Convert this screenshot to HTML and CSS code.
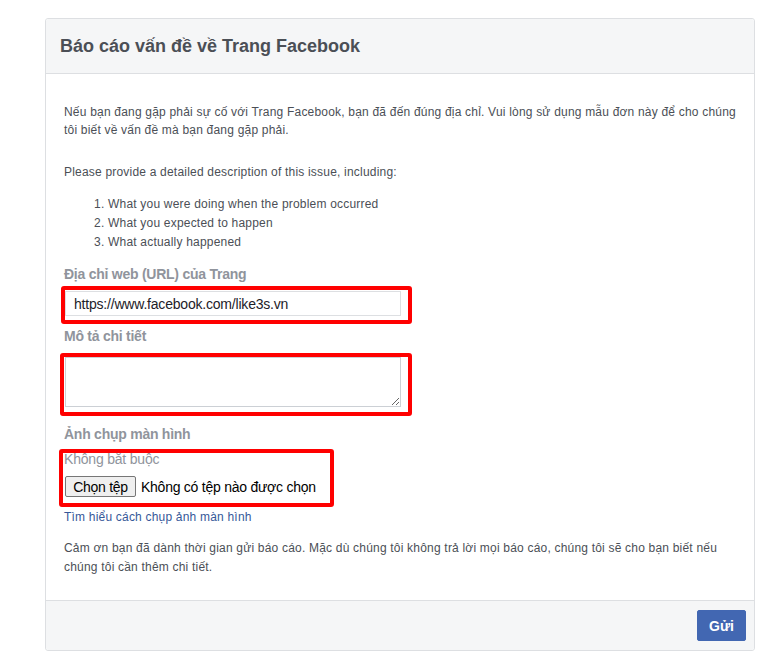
FILE: index.html
```html
<!DOCTYPE html>
<html lang="vi">
<head>
<meta charset="utf-8">
<title>Báo cáo vấn đề về Trang Facebook</title>
<link rel="stylesheet" href="styles.css">
</head>
<body>
<div class="page">
  <div class="card">
    <div class="card-header">
      <h2 class="title">Báo cáo vấn đề về Trang Facebook</h2>
    </div>
    <div class="card-body">
      <p class="intro">Nếu bạn đang gặp phải sự cố với Trang Facebook, bạn đã đến đúng địa chỉ. Vui lòng sử dụng mẫu đơn này để cho chúng tôi biết về vấn đề mà bạn đang gặp phải.</p>
      <p class="prompt">Please provide a detailed description of this issue, including:</p>
      <ol class="steps">
        <li>What you were doing when the problem occurred</li>
        <li>What you expected to happen</li>
        <li>What actually happened</li>
      </ol>

      <label class="field-label label-url">Địa chỉ web (URL) của Trang</label>
      <div class="field field-url">
        <input class="text-input" type="text" value="https://www.facebook.com/like3s.vn">
        <span class="mark mark-url"></span>
      </div>

      <label class="field-label label-desc">Mô tả chi tiết</label>
      <div class="field field-desc">
        <textarea class="text-area"></textarea>
        <span class="mark mark-desc"></span>
      </div>

      <label class="field-label label-shot">Ảnh chụp màn hình</label>
      <div class="field field-shot">
        <div class="hint">Không bắt buộc</div>
        <div class="file-row">
          <button class="file-btn" type="button">Chọn tệp</button>
          <span class="file-name">Không có tệp nào được chọn</span>
        </div>
        <span class="mark mark-shot"></span>
      </div>

      <a class="help-link" href="#">Tìm hiểu cách chụp ảnh màn hình</a>

      <p class="thanks">Cảm ơn bạn đã dành thời gian gửi báo cáo. Mặc dù chúng tôi không trả lời mọi báo cáo, chúng tôi sẽ cho bạn biết nếu chúng tôi cần thêm chi tiết.</p>
    </div>
    <div class="card-footer">
      <button class="submit" type="button">Gửi</button>
    </div>
  </div>
</div>
</body>
</html>
```
FILE: styles.css
```css
html, body {
  margin: 0;
  padding: 0;
  background: #ffffff;
}

body {
  font-family: "Liberation Sans", Arial, sans-serif;
  color: #4b4f56;
}

.page {
  padding: 18px 0 0 45px;
}

.card {
  width: 708px;
  border: 1px solid #dddfe2;
  border-radius: 3px;
  background: #ffffff;
}

.card-header {
  height: 54px;
  background: #f5f6f7;
  border-bottom: 1px solid #dddfe2;
  border-radius: 3px 3px 0 0;
  display: flex;
  align-items: center;
  padding: 0 14px;
}

.title {
  margin: 0;
  font-size: 18px;
  font-weight: bold;
  color: #4b4f56;
  line-height: 22px;
}

.card-body {
  padding: 29px 18px 23px 18px;
  font-size: 12px;
  letter-spacing: 0.2px;
}

.intro {
  margin: 0;
  line-height: 18px;
}

.prompt {
  margin: 24px 0 0 0;
  line-height: 18px;
}

.steps {
  margin: 14px 0 0 0;
  padding-left: 44px;
  line-height: 19px;
}

.field-label {
  display: block;
  font-size: 14px;
  font-weight: bold;
  letter-spacing: -0.25px;
  color: #90949c;
  line-height: 18px;
}

.label-url {
  margin-top: 13px;
}

.label-desc {
  margin-top: 11px;
}

.label-shot {
  margin-top: 18px;
}

.field {
  position: relative;
}

.field-url {
  margin-top: 8px;
  width: 336px;
  margin-left: 1px;
}

.field-desc {
  margin-top: 12px;
  width: 336px;
  margin-left: 1px;
}

.field-shot {
  margin-top: 7px;
}

.text-input {
  display: block;
  box-sizing: border-box;
  width: 336px;
  height: 25px;
  margin: 0;
  border: 1px solid #dddfe2;
  padding: 0 8px;
  font-family: "Liberation Sans", Arial, sans-serif;
  font-size: 14px;
  letter-spacing: -0.2px;
  color: #1d2129;
  background: #ffffff;
}

.text-area {
  display: block;
  box-sizing: border-box;
  width: 336px;
  height: 50px;
  margin: 0;
  border: 1px solid #ccd0d5;
  padding: 4px 8px;
  font-family: "Liberation Sans", Arial, sans-serif;
  font-size: 14px;
  resize: vertical;
  background: #ffffff;
}

.mark {
  position: absolute;
  border: 4px solid #ff0000;
  border-radius: 3px;
  pointer-events: none;
}

.mark-url {
  left: -4px;
  top: -5px;
  right: -11px;
  bottom: -8px;
}

.mark-desc {
  left: -5px;
  top: -4px;
  right: -11px;
  bottom: -9px;
}

.mark-shot {
  left: -5px;
  top: -1px;
  width: 267px;
  bottom: -10px;
}

.hint {
  font-size: 14px;
  line-height: 18px;
  letter-spacing: -0.2px;
  color: #90949c;
}

.file-row {
  margin-top: 8px;
  display: flex;
  align-items: center;
  gap: 5px;
  height: 21px;
}

.file-btn {
  box-sizing: border-box;
  height: 21px;
  width: 71px;
  margin: 0 0 0 1px;
  padding: 0 6px;
  border: 1px solid #767676;
  border-radius: 2px;
  background: #efefef;
  font-family: "Liberation Sans", Arial, sans-serif;
  font-size: 14px;
  letter-spacing: -0.3px;
  color: #000000;
}

.file-name {
  font-size: 14px;
  letter-spacing: -0.25px;
  color: #000000;
}

.help-link {
  display: block;
  margin-top: 11px;
  line-height: 18px;
  color: #365899;
  text-decoration: none;
}

.thanks {
  margin: 13px 0 0 0;
  line-height: 19px;
}

.card-footer {
  background: #f5f6f7;
  border-top: 1px solid #dddfe2;
  border-radius: 0 0 3px 3px;
  display: flex;
  justify-content: flex-end;
  align-items: flex-start;
  padding: 9px 8px 0 0;
  box-sizing: border-box;
  height: 50px;
}

.submit {
  width: 49px;
  height: 31px;
  border: 1px solid #4267b2;
  border-radius: 2px;
  background: #4267b2;
  color: #ffffff;
  font-family: "Liberation Sans", Arial, sans-serif;
  font-size: 14px;
  font-weight: bold;
  padding: 0;
}
```
